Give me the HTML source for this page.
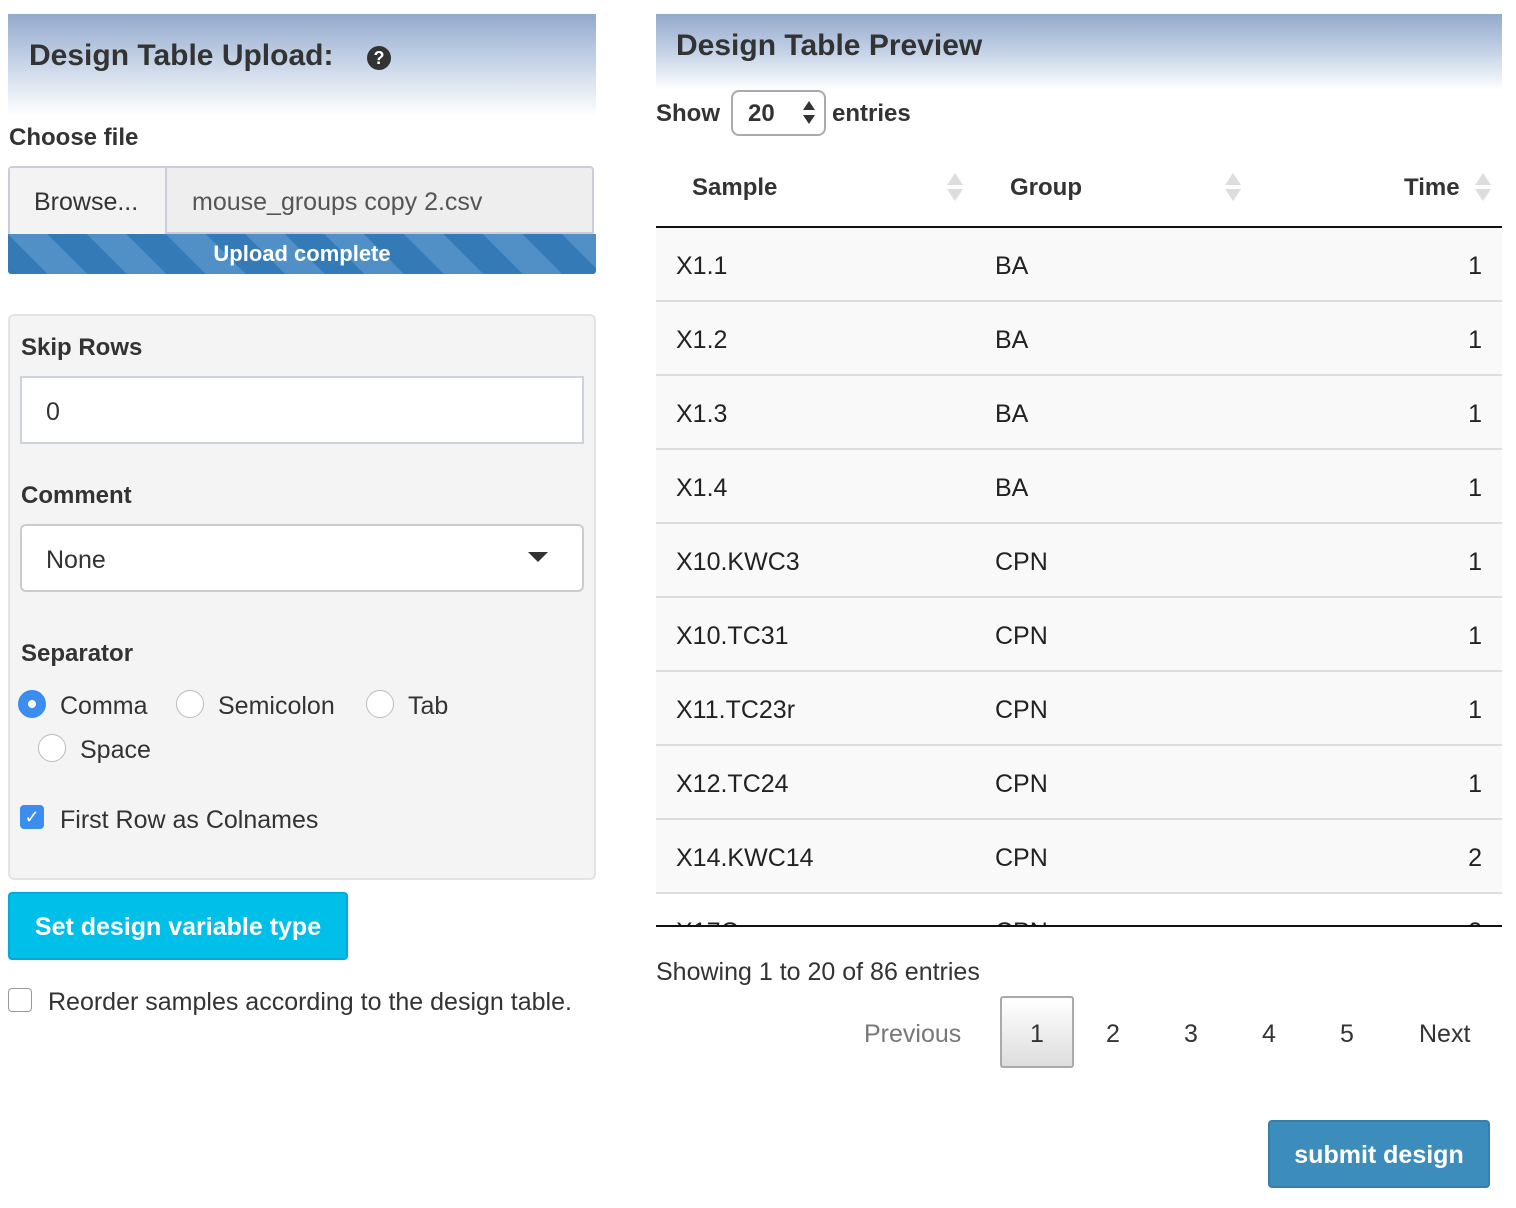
<!DOCTYPE html>
<html><head><meta charset="utf-8"><style>
*{margin:0;padding:0;box-sizing:border-box}
body{width:1516px;height:1208px;background:#fff;position:relative;overflow:hidden;font-family:"Liberation Sans",sans-serif;color:#333}
.a{position:absolute;white-space:nowrap}
.t{font-size:25px;line-height:30px}
.t.b{font-size:24px}
.b{font-weight:bold}
.hdr{position:absolute;background:linear-gradient(#93a9cb,#c4d2e6 45%,#fff 100%)}
.row{position:absolute;left:656px;width:846px;height:74px;background:#f9f9f9;border-bottom:2px solid #ddd}
.row span{position:absolute;top:23px;font-size:25px;line-height:30px;color:#222}
.radio{position:absolute;width:28px;height:28px;border-radius:50%;border:1.5px solid #bbb;background:#fff}
</style></head><body>

<div class="hdr" style="left:8px;top:14px;width:588px;height:102px"></div>
<div class="a b" style="left:29px;top:38px;font-size:30px;line-height:36px;color:#333">Design Table Upload:</div>
<div class="a" style="left:367px;top:46px;width:24px;height:24px;border-radius:50%;background:#333;color:#fff;font-size:18px;font-weight:bold;line-height:24px;text-align:center">?</div>

<div class="a t b" style="left:9px;top:123px">Choose file</div>
<div class="a" style="left:8px;top:166px;width:586px;height:68px;border:2px solid #ccd;border-radius:4px 4px 0 0;background:#eee"></div>
<div class="a" style="left:10px;top:168px;width:157px;height:66px;background:#f3f3f3;border-right:2px solid #ccd"></div>
<div class="a t" style="left:34px;top:187px;color:#333">Browse...</div>
<div class="a t" style="left:192px;top:187px;color:#555">mouse_groups copy 2.csv</div>
<div class="a" style="left:8px;top:234px;width:588px;height:40px;border-radius:0 0 3px 3px;background:repeating-linear-gradient(45deg,#337ab7 0 28px,#5090c6 28px 56px)"></div>
<div class="a b" style="left:8px;top:240px;width:588px;text-align:center;font-size:22px;line-height:28px;color:#fff">Upload complete</div>

<div class="a" style="left:8px;top:314px;width:588px;height:566px;background:#f4f4f4;border:2px solid #e3e3e3;border-radius:6px"></div>
<div class="a t b" style="left:21px;top:333px">Skip Rows</div>
<div class="a" style="left:20px;top:376px;width:564px;height:68px;background:#fff;border:2px solid #ccd3dc"></div>
<div class="a t" style="left:46px;top:397px">0</div>
<div class="a t b" style="left:21px;top:481px">Comment</div>
<div class="a" style="left:20px;top:524px;width:564px;height:68px;background:#fff;border:2px solid #ccc;border-radius:6px"></div>
<div class="a t" style="left:46px;top:545px">None</div>
<div class="a" style="left:528px;top:552px;width:0;height:0;border-left:10px solid transparent;border-right:10px solid transparent;border-top:10px solid #333"></div>
<div class="a t b" style="left:21px;top:639px">Separator</div>
<div class="radio" style="left:18px;top:690px;background:#3b8df0;border-color:#3b8df0"></div>
<div class="a" style="left:28px;top:700px;width:8px;height:8px;border-radius:50%;background:#fff"></div>
<div class="a t" style="left:60px;top:691px">Comma</div>
<div class="radio" style="left:176px;top:690px"></div>
<div class="a t" style="left:218px;top:691px">Semicolon</div>
<div class="radio" style="left:366px;top:690px"></div>
<div class="a t" style="left:408px;top:691px">Tab</div>
<div class="radio" style="left:38px;top:734px"></div>
<div class="a t" style="left:80px;top:735px">Space</div>
<div class="a" style="left:20px;top:805px;width:24px;height:24px;border-radius:4px;background:#3b8df0;color:#fff;font-size:18px;line-height:24px;text-align:center">✓</div>
<div class="a t" style="left:60px;top:805px">First Row as Colnames</div>

<div class="a" style="left:8px;top:892px;width:340px;height:68px;background:#00bfe8;border:2px solid #00acd6;border-radius:4px"></div>
<div class="a b" style="left:8px;top:912px;width:340px;text-align:center;font-size:25px;line-height:30px;color:#fff">Set design variable type</div>
<div class="a" style="left:8px;top:988px;width:24px;height:24px;border:1.5px solid #999;border-radius:4px;background:#fff"></div>
<div class="a t" style="left:48px;top:987px">Reorder samples according to the design table.</div>

<div class="hdr" style="left:656px;top:14px;width:846px;height:76px;background:linear-gradient(#93a9cb,#c4d2e6 50%,#fff 100%)"></div>
<div class="a b" style="left:676px;top:28px;font-size:30px;line-height:36px">Design Table Preview</div>
<div class="a t b" style="left:656px;top:99px">Show</div>
<div class="a" style="left:731px;top:90px;width:95px;height:46px;border:2px solid #aaa;border-radius:8px;background:#fff"></div>
<div class="a t b" style="left:748px;top:99px">20</div>
<div class="a" style="left:803px;top:101px;border-left:6px solid transparent;border-right:6px solid transparent;border-bottom:9px solid #333"></div>
<div class="a" style="left:803px;top:115px;border-left:6px solid transparent;border-right:6px solid transparent;border-top:9px solid #333"></div>
<div class="a t b" style="left:832px;top:99px">entries</div>

<div class="a t b" style="left:692px;top:173px">Sample</div>
<div class="a t b" style="left:1010px;top:173px">Group</div>
<div class="a t b" style="left:1404px;top:173px">Time</div>
<div class="a" style="left:947px;top:173px;border-left:8px solid transparent;border-right:8px solid transparent;border-bottom:12px solid #ddd"></div>
<div class="a" style="left:947px;top:189px;border-left:8px solid transparent;border-right:8px solid transparent;border-top:12px solid #ddd"></div>
<div class="a" style="left:1225px;top:173px;border-left:8px solid transparent;border-right:8px solid transparent;border-bottom:12px solid #ddd"></div>
<div class="a" style="left:1225px;top:189px;border-left:8px solid transparent;border-right:8px solid transparent;border-top:12px solid #ddd"></div>
<div class="a" style="left:1475px;top:173px;border-left:8px solid transparent;border-right:8px solid transparent;border-bottom:12px solid #ddd"></div>
<div class="a" style="left:1475px;top:189px;border-left:8px solid transparent;border-right:8px solid transparent;border-top:12px solid #ddd"></div>
<div class="a" style="left:656px;top:226px;width:846px;height:2px;background:#111"></div>

<div style="position:absolute;left:0;top:228px;width:1516px;height:698px;overflow:hidden">
<div class="row" style="top:0"><span style="left:20px">X1.1</span><span style="left:339px">BA</span><span style="right:20px">1</span></div>
<div class="row" style="top:74px"><span style="left:20px">X1.2</span><span style="left:339px">BA</span><span style="right:20px">1</span></div>
<div class="row" style="top:148px"><span style="left:20px">X1.3</span><span style="left:339px">BA</span><span style="right:20px">1</span></div>
<div class="row" style="top:222px"><span style="left:20px">X1.4</span><span style="left:339px">BA</span><span style="right:20px">1</span></div>
<div class="row" style="top:296px"><span style="left:20px">X10.KWC3</span><span style="left:339px">CPN</span><span style="right:20px">1</span></div>
<div class="row" style="top:370px"><span style="left:20px">X10.TC31</span><span style="left:339px">CPN</span><span style="right:20px">1</span></div>
<div class="row" style="top:444px"><span style="left:20px">X11.TC23r</span><span style="left:339px">CPN</span><span style="right:20px">1</span></div>
<div class="row" style="top:518px"><span style="left:20px">X12.TC24</span><span style="left:339px">CPN</span><span style="right:20px">1</span></div>
<div class="row" style="top:592px"><span style="left:20px">X14.KWC14</span><span style="left:339px">CPN</span><span style="right:20px">2</span></div>
<div class="row" style="top:666px;background:#fff"><span style="left:20px">X17C</span><span style="left:339px">CPN</span><span style="right:20px">2</span></div>
</div>
<div class="a" style="left:656px;top:925px;width:846px;height:2px;background:#111"></div>

<div class="a t" style="left:656px;top:957px">Showing 1 to 20 of 86 entries</div>
<div class="a t" style="left:864px;top:1019px;color:#777">Previous</div>
<div class="a" style="left:1000px;top:996px;width:74px;height:72px;border:2px solid #aaa;border-radius:3px;background:linear-gradient(#fff,#ddd)"></div>
<div class="a t" style="left:1000px;top:1019px;width:74px;text-align:center">1</div>
<div class="a t" style="left:1106px;top:1019px">2</div>
<div class="a t" style="left:1184px;top:1019px">3</div>
<div class="a t" style="left:1262px;top:1019px">4</div>
<div class="a t" style="left:1340px;top:1019px">5</div>
<div class="a t" style="left:1419px;top:1019px">Next</div>

<div class="a" style="left:1268px;top:1120px;width:222px;height:68px;background:#3c8dbc;border:2px solid #367fa9;border-radius:4px"></div>
<div class="a b" style="left:1268px;top:1140px;width:222px;text-align:center;font-size:25px;line-height:30px;color:#fff">submit design</div>
</body></html>
